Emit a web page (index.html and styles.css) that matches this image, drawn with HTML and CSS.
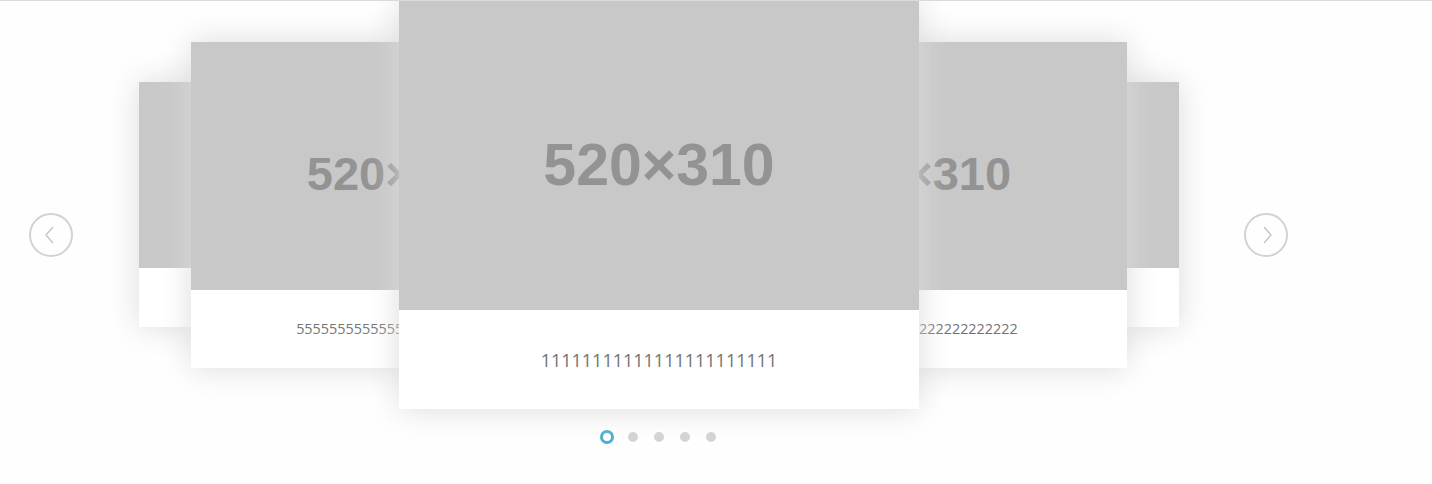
FILE: index.html
```html
<!DOCTYPE html>
<html>
<head>
<meta charset="utf-8">
<link rel="stylesheet" href="styles.css">
</head>
<body>
<div class="carousel">
  <button class="arrow arrow-left" aria-label="previous">
    <svg width="14" height="20" viewBox="0 0 14 20"><polyline points="10,2 3,10 10,18" fill="none" stroke="#c4c4c4" stroke-width="1.4"/></svg>
  </button>
  <div class="stage">
    <div class="card lvl2 z1">
      <div class="img"><span class="covered">520×310</span></div>
      <div class="cap"><span class="covered">4444444444444444444444</span></div>
    </div>
    <div class="card lvl1 z2 ml-260">
      <div class="img">520×310</div>
      <div class="cap">5555555555555555555555555</div>
    </div>
    <div class="card lvl0 z3 ml-208">
      <div class="img">520×310</div>
      <div class="cap">11111111111111111111111</div>
    </div>
    <div class="card lvl1 z2 ml-208">
      <div class="img">520×310</div>
      <div class="cap">222222222222222222222222</div>
    </div>
    <div class="card lvl2 z1 ml-260">
      <div class="img"><span class="covered">520×310</span></div>
      <div class="cap"><span class="covered">3333333333333333333333</span></div>
    </div>
  </div>
  <button class="arrow arrow-right" aria-label="next">
    <svg width="14" height="20" viewBox="0 0 14 20"><polyline points="4,2 11,10 4,18" fill="none" stroke="#c4c4c4" stroke-width="1.4"/></svg>
  </button>
</div>
<div class="dots">
  <span class="dot active"></span>
  <span class="dot"></span>
  <span class="dot"></span>
  <span class="dot"></span>
  <span class="dot"></span>
</div>
</body>
</html>
```
FILE: styles.css
```css
html, body {
  margin: 0;
  padding: 0;
}
body {
  background: #fefefe;
  border-top: 1px solid #dadada;
  font-family: "Open Sans", "Liberation Sans", sans-serif;
  height: 483px;
  overflow: hidden;
}
.carousel {
  display: flex;
  align-items: flex-start;
  width: 1318px;
}
.arrow {
  flex: none;
  width: 44px;
  height: 44px;
  box-sizing: border-box;
  border: 2px solid #d2d2d2;
  border-radius: 50%;
  background: transparent;
  padding: 0;
  display: flex;
  align-items: center;
  justify-content: center;
  margin-top: 212px;
}
.arrow-left { margin-left: 29px; }
.arrow-right { margin-left: 65px; }
.arrow-left svg { margin-left: -2px; }
.arrow-right svg { margin-left: 2px; }
.stage {
  display: flex;
  align-items: center;
  margin-left: 66px;
  margin-top: -1px;
  height: 409px;
}
.card {
  flex: none;
  display: flex;
  flex-direction: column;
  background: #fff;
  box-shadow: 0 0 30px #dcdcdc;
  position: relative;
}
.z1 { z-index: 1; }
.z2 { z-index: 2; }
.z3 { z-index: 3; }
.ml-260 { margin-left: -260px; }
.ml-208 { margin-left: -208px; }
.img {
  background: #c8c8c8;
  color: #939393;
  font-family: "Liberation Sans", Arial, sans-serif;
  font-weight: bold;
  display: flex;
  align-items: center;
  justify-content: center;
  box-sizing: border-box;
}
.cap {
  display: flex;
  align-items: center;
  justify-content: center;
  color: #737373;
}
.covered { visibility: hidden; }
.lvl0 { width: 520px; }
.lvl0 .img { height: 310px; font-size: 59px; padding-top: 20px; }
.lvl0 .cap { height: 99px; font-size: 18px; }
.lvl1 { width: 416px; }
.lvl1 .img { height: 248px; font-size: 47px; padding-top: 16px; }
.lvl1 .cap { height: 78px; font-size: 14.4px; }
.lvl2 { width: 312px; }
.lvl2 .img { height: 186px; font-size: 36px; padding-top: 12px; }
.lvl2 .cap { height: 59px; font-size: 10.8px; }
.dots {
  width: 1318px;
  display: flex;
  justify-content: center;
  gap: 10px;
  margin-top: 20px;
}
.dot {
  width: 16px;
  height: 16px;
  box-sizing: border-box;
  border-radius: 50%;
  border: 3px solid #fff;
  background: #d4d4d4;
}
.dot.active {
  width: 14px;
  height: 14px;
  margin: 1px;
  border: 3px solid #4aafcd;
  background: #fff;
}
```
